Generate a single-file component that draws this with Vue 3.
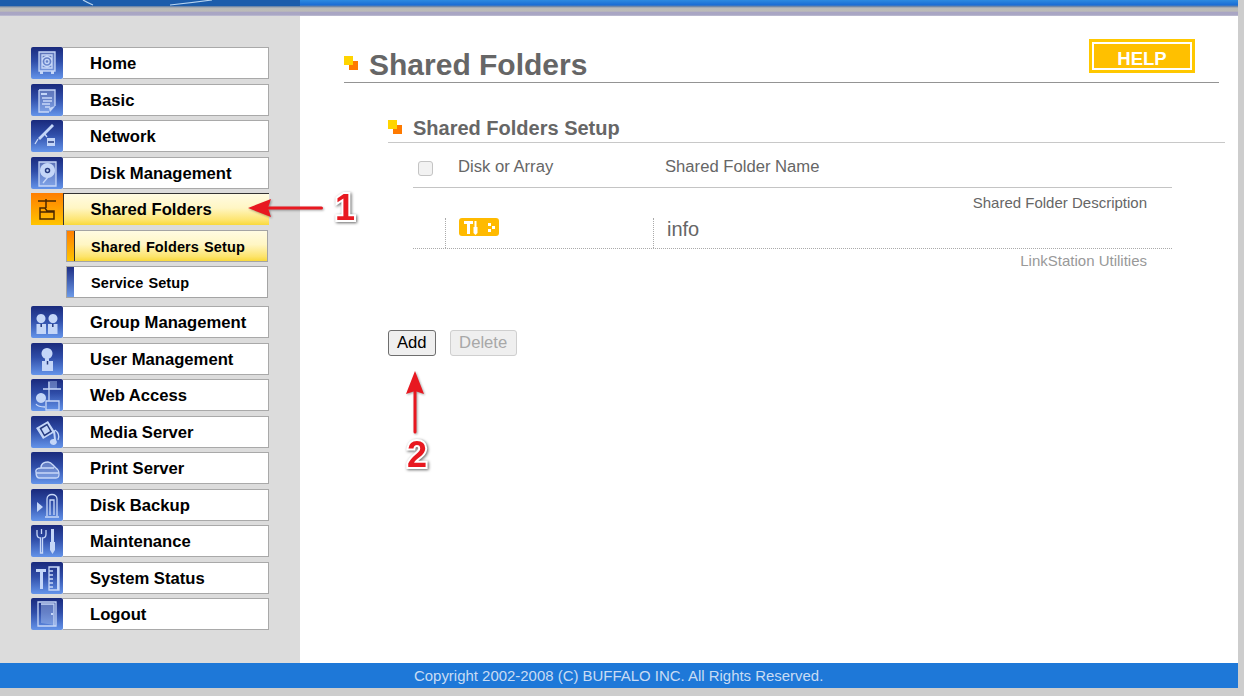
<script setup>
const top = [
  { label: 'Home', soft: 'M8 5h16v19H8z', fill: 'M9 24h3v3H9zM20 24h3v3h-3z', line: 'M8 5h16v19H8zM11 8h10v13H11zM21 14.500a5 5 0 1 1-10 0a5 5 0 1 1 10 0M18 14.500a2 2 0 1 1-4 0a2 2 0 1 1 4 0' },
  { label: 'Basic', soft: 'M8 6h16v17l-5 5H8z', fill: 'M10 9h6v2h-6zM18 24l6-2-5 6z', line: 'M8 6h16v16M8 6v22h10M11 14h10M12 17h9M11 20h8M14 23h5' },
  { label: 'Network', fill: 'M21 4l2 2L9 20l-2-2zM16 18h8v8h-8z', line: 'M7 19l-3 5M13 13l3 4', dark: 'M17 22h6' },
  { label: 'Disk Management', soft: 'M8 5h17v24H8z', fill: 'M16.500 6a7.500 7.500 0 1 1-.01 0z', line: 'M8 5h17v24H8zM12 26l5-6', dark: 'M18.500 13.500a2 2 0 1 1-4 0a2 2 0 1 1 4 0' },
  { label: 'Shared Folders', active: true, line: 'M7 8h18M15 6v9M9 26V15h5l2 3h7v8zM9 19h14' },
]
const sub = [
  { label: 'Shared Folders Setup', active: true },
  { label: 'Service Setup', active: false },
]
const rest = [
  { label: 'Group Management', fill: 'M10 8a4.500 4.500 0 1 1-.01 0zM22 8a4.500 4.500 0 1 1-.01 0zM5.500 18h9.500v10H5.500zM17 18h9.500v10H17z', dark: 'M10.200 18v3M21.800 18v3' },
  { label: 'User Management', fill: 'M16 5a5.500 5.500 0 1 1-.01 0zM14 15h4v3h-4zM11 18h11v10H11z', dark: 'M16.500 18v3.500' },
  { label: 'Web Access', soft: 'M17 2h9v8h-9z', fill: 'M10 14a5 5 0 1 1-.01 0z', line: 'M12 10h18M18 3v19M15 22h13v9H15zM5 25c2 3 6 3 9 3' },
  { label: 'Media Server', fill: 'M5 12l12-7 7 11-12 7zM24 14l1 10a3.500 3 0 1 1-2-1l-1-8z', line: 'M24 14c3 2 5 6 3 10', dark: 'M9.500 12.500l6.500-4 4 7-6.500 4z' },
  { label: 'Print Server', soft: 'M5 20l4-4c0-4 4-7 8-6s5 4 8 6l3 5-2 5H7z', line: 'M5 20c-1-3 3-4 5-4c0-4 3-6 7-6s5 4 8 6s3 4 3 6c0 2-1 4-3 4H8c-2 0-3-3-3-6zM5 21h23M10 16h13' },
  { label: 'Disk Backup', fill: 'M6 13l6 5-6 5z', line: 'M16 27V10c0-6 10-6 10 0v17M19 26V11h4v15M14 28h14' },
  { label: 'Maintenance', fill: 'M20 4h3v13h-3zM19 17h5v8l-2.500 4-2.500-4z', line: 'M6 5v4c0 3 2 4 3.500 4v15h2V13c1.500 0 3.500-1 3.500-4V5M10.500 4v5' },
  { label: 'System Status', fill: 'M5 7h10v3h-3v17H9V10H5zM26 5h2v23h-2z', line: 'M18 5h10v23H18zM18 9h4M18 13h4M18 17h4M18 21h4M18 25h4' },
  { label: 'Logout', soft: 'M10 6h13v21l-13-2z', fill: 'M20 15h2v2h-2z', line: 'M7 4h18v24H7zM10 6h13v22M7 28l14 0' },
]
</script>

<template>
  <div class="page">
    <div class="shell">
      <header class="topbar">
        <svg class="swoosh" viewBox="0 0 300 6" width="300" height="6">
          <path d="M83 0 Q88 3 93 5" class="curve" />
          <path d="M170 5 Q190 3 212 0" class="curve" />
        </svg>
      </header>

      <div class="middle">
        <aside class="sidebar">
          <nav class="nav">
            <a v-for="item in top" :key="item.label" class="item" :class="{ on: item.active }">
              <span class="tile">
                <svg viewBox="0 0 32 32" width="32" height="32">
                  <path v-if="item.soft" :d="item.soft" class="isoft" />
                  <path v-if="item.fill" :d="item.fill" class="ifill" />
                  <path v-if="item.line" :d="item.line" class="iline" />
                  <path v-if="item.dark" :d="item.dark" class="idark" />
                </svg>
              </span>
              <span class="label">{{ item.label }}</span>
            </a>
            <a v-for="s in sub" :key="s.label" class="subitem" :class="{ on: s.active }">
              <span class="bar"></span>
              <span class="sublabel">{{ s.label }}</span>
            </a>
            <a v-for="item in rest" :key="item.label" class="item rest">
              <span class="tile">
                <svg viewBox="0 0 32 32" width="32" height="32">
                  <path v-if="item.soft" :d="item.soft" class="isoft" />
                  <path v-if="item.fill" :d="item.fill" class="ifill" />
                  <path v-if="item.line" :d="item.line" class="iline" />
                  <path v-if="item.dark" :d="item.dark" class="idark" />
                </svg>
              </span>
              <span class="label">{{ item.label }}</span>
            </a>
          </nav>
        </aside>

        <main class="content">
          <div class="title-row">
            <span class="bullet big"><i class="y"></i><i class="o"></i></span>
            <h1 class="title">Shared Folders</h1>
            <a class="help"><span>HELP</span></a>
          </div>

          <section class="section">
            <div class="section-head">
              <span class="bullet"><i class="y"></i><i class="o"></i></span>
              <h2 class="subtitle">Shared Folders Setup</h2>
            </div>

            <div class="table">
              <div class="thead">
                <span class="check"></span>
                <span class="col-disk">Disk or Array</span>
                <span class="col-name">Shared Folder Name</span>
              </div>
              <div class="desc">Shared Folder Description</div>
              <div class="row">
                <span class="cell-a"></span>
                <span class="cell-b">
                  <span class="tool">
                    <svg viewBox="0 0 40 18" width="40" height="18">
                      <path d="M5 3h9v3h-3v10H8V6H5zM15.500 3h2v6h-2zM14.500 9h4v6l-2 2-2-2zM29 5h3v3h-3zM33 8h3v3h-3zM29 11h3v3h-3z" fill="#fff" />
                    </svg>
                  </span>
                </span>
                <span class="cell-c">info</span>
              </div>
              <div class="desc faint">LinkStation Utilities</div>
            </div>

            <div class="actions">
              <button class="btn" type="button">Add</button>
              <button class="btn del" type="button" disabled>Delete</button>
            </div>
          </section>
        </main>
      </div>

      <footer class="footer">Copyright 2002-2008 (C) BUFFALO INC. All Rights Reserved.</footer>
    </div>

    <svg class="arrow one" width="90" height="24" viewBox="0 0 90 24">
      <path d="M73.500 12H20" class="shaft" />
      <path d="M0 12L23 3L20 12L23 21Z" class="head" />
    </svg>
    <span class="num n1">1</span>
    <svg class="arrow two" width="24" height="70" viewBox="0 0 24 70">
      <path d="M12 61V20" class="shaft" />
      <path d="M12 0L21 23L12 20L3 23Z" class="head" />
    </svg>
    <span class="num n2">2</span>
  </div>
</template>

<style>
html, body { margin: 0; background: #cdcdcd; }
</style>

<style scoped>
.page {
  position: relative;
  width: 1244px;
  height: 696px;
  overflow: hidden;
  background: #cdcdcd;
  font-family: "Liberation Sans", Arial, sans-serif;
}
.shell {
  width: 1238px;
  height: 688px;
  display: flex;
  flex-direction: column;
}
.topbar {
  position: relative;
  height: 16px;
  flex: none;
  background: linear-gradient(#2c8ae0 0, #1a6cd4 5px, #6f87a8 6.500px, #b9b9b9 8px, #bcbcb8 11px, #a9a5c4 12.500px, #aaa7c4 15px, #c8c8d8 16px);
}
.swoosh {
  position: absolute;
  left: 0;
  top: 0;
  background: #1c5cab;
}
.curve { fill: none; stroke: #b8d4f0; stroke-width: 1.2; }
.middle { flex: 1; display: flex; min-height: 0; }
.sidebar { width: 300px; flex: none; background: #dcdcdc; }
.nav { display: flex; flex-direction: column; padding: 31px 0 0 31px; }
.item {
  display: flex;
  width: 238px;
  height: 32px;
  margin-bottom: 4.5px;
}
.rest:nth-of-type(8) { margin-top: 3.5px; }
.tile {
  width: 32px;
  height: 32px;
  flex: none;
  border-radius: 2px;
  background: linear-gradient(#1a2a7c, #2f4da8 45%, #6494ea);
}
.tile svg { display: block; filter: blur(0.35px); }
.isoft { fill: #a8c0f0; opacity: 0.45; }
.ifill { fill: #c4d6f8; }
.iline { fill: none; stroke: #c8d8f8; stroke-width: 1.3; }
.idark { fill: none; stroke: #24397f; stroke-width: 1.5; }
.label {
  flex: 1;
  box-sizing: border-box;
  background: #fff;
  border: 1.500px solid #a9a9a9;
  border-left: 0;
  padding-left: 27px;
  font-size: 16.65px;
  font-weight: 700;
  line-height: 31px;
  color: #000;
}
.item.on .tile {
  background: linear-gradient(#ff7e00, #ffc400);
  border-radius: 0;
}
.item.on .iline { stroke: #4a2800; stroke-width: 1.5; }
.item.on .label {
  border: 0;
  border-top: 1.500px solid #333;
  border-left: 1.500px solid #333;
  padding-left: 26.500px;
  background: linear-gradient(#fffbe2, #fff6c4 45%, #fde46c 85%, #f9d93c);
}
.subitem {
  display: flex;
  box-sizing: border-box;
  width: 202px;
  height: 32px;
  margin: 0 0 4.5px 35px;
  border: 1.500px solid #a4a4a4;
  background: #fff;
}
.bar {
  width: 7px;
  flex: none;
  background: linear-gradient(#1f2f85, #6c9ae8);
  border-right: 1.500px solid #fff;
}
.subitem.on { background: linear-gradient(#fffbe2, #fff6c4 45%, #fde46c 85%, #f9d93c); }
.subitem.on .bar {
  background: linear-gradient(#ff7e00, #ffc400);
  border-right: 1.500px solid #333;
}
.sublabel {
  padding-left: 16px;
  font-size: 14.5px;
  font-weight: 700;
  letter-spacing: 0.1px;
  word-spacing: 1px;
  line-height: 33.5px;
  color: #000;
}
.content { flex: 1; min-width: 0; background: #fff; }
.title-row {
  display: flex;
  align-items: center;
  box-sizing: border-box;
  height: 44px;
  padding-top: 6px;
  margin: 23px 0 0 44px;
  width: 875px;
  border-bottom: 1px solid #949494;
}
.bullet {
  position: relative;
  display: block;
  flex: none;
  width: 14px;
  height: 14px;
}
.bullet .y, .bullet .o { position: absolute; display: block; width: 9px; height: 9px; }
.bullet .y { left: 0; top: 0; background: #ffd400; z-index: 1; }
.bullet .o { left: 5px; top: 5px; background: #ff7a00; }
.big { margin-bottom: 2px; }
.title {
  position: relative;
  top: 1px;
  margin: 0 0 0 11px;
  flex: 1;
  font-size: 30px;
  font-weight: 700;
  line-height: 36px;
  color: #666;
}
.help {
  display: flex;
  box-sizing: border-box;
  width: 106px;
  height: 34px;
  margin: -16px 24px 0 0;
  padding: 3px;
  background: #ffc800;
}
.help span {
  flex: 1;
  border: 2px solid #fff;
  text-align: center;
  font-size: 18.5px;
  font-weight: 700;
  line-height: 29px;
  color: #fff;
  background: #ffc000;
}
.section { margin: 0 0 0 88px; }
.section-head {
  display: flex;
  align-items: center;
  box-sizing: border-box;
  height: 36px;
  margin-top: 24px;
  border-bottom: 1px solid #c8c8c8;
  margin-right: 13px;
}
.section-head .bullet { margin-top: 5px; }
.subtitle {
  position: relative;
  top: 3px;
  margin: 0 0 0 11px;
  font-size: 20px;
  font-weight: 700;
  line-height: 24px;
  color: #666;
}
.table { width: 759px; margin-left: 25px; color: #666; }
.thead {
  display: flex;
  align-items: center;
  box-sizing: border-box;
  height: 45px;
  padding-top: 4px;
  border-bottom: 1px solid #c4c4c4;
  font-size: 16.65px;
}
.check {
  box-sizing: border-box;
  width: 15px;
  height: 15px;
  margin: 2px 0 0 5px;
  border: 1px solid #c4c4c4;
  border-radius: 3px;
  background: #f2f2f2;
}
.col-disk { margin-left: 25px; width: 207px; }
.col-name { flex: 1; }
.desc {
  height: 30px;
  box-sizing: border-box;
  padding: 6px 25px 0 0;
  text-align: right;
  font-size: 15px;
  line-height: 17px;
}
.desc.faint { color: #999; height: auto; padding-top: 3px; }
.row {
  display: flex;
  box-sizing: border-box;
  height: 31px;
  border-bottom: 1px dotted #aaa;
}
.cell-a { width: 32px; border-right: 1px dotted #aaa; }
.cell-b { width: 208px; box-sizing: border-box; padding-left: 13px; border-right: 1px dotted #aaa; }
.tool {
  display: block;
  width: 40px;
  height: 18px;
  border-radius: 3px;
  background: #ffba00;
}
.tool svg { display: block; }
.cell-c { padding-left: 13px; font-size: 20px; line-height: 23px; }
.actions { display: flex; gap: 14px; margin-top: 61px; }
.btn {
  box-sizing: border-box;
  height: 26px;
  padding: 0 8px;
  border: 1px solid #6e6e6e;
  border-radius: 3px;
  background: #efefef;
  font-family: "Liberation Sans", Arial, sans-serif;
  font-size: 16.65px;
  color: #000;
}
.btn.del { padding: 0 8.5px; }
.btn:disabled { border-color: #cfcfcf; color: #a8a8a8; }
.footer {
  height: 25px;
  flex: none;
  background: #1e78d8;
  padding-left: 414px;
  font-size: 14.95px;
  line-height: 25px;
  color: #c8dcf4;
}
.arrow { position: absolute; overflow: visible; filter: drop-shadow(1px 1px 1px rgba(0,0,0,.35)); }
.arrow.one { left: 248px; top: 196px; }
.arrow.two { left: 403px; top: 371px; }
.shaft { fill: none; stroke: #e81820; stroke-width: 3; stroke-linecap: round; }
.head { fill: #e81820; }
.num {
  position: absolute;
  font-size: 36px;
  font-weight: 700;
  line-height: 36px;
  color: #e81820;
  -webkit-text-stroke: 4px #fff;
  paint-order: stroke fill;
  filter: drop-shadow(1px 1px 1.5px rgba(0,0,0,.6));
}
.n1 { left: 335px; top: 190px; }
.n2 { left: 407px; top: 437px; }
</style>
